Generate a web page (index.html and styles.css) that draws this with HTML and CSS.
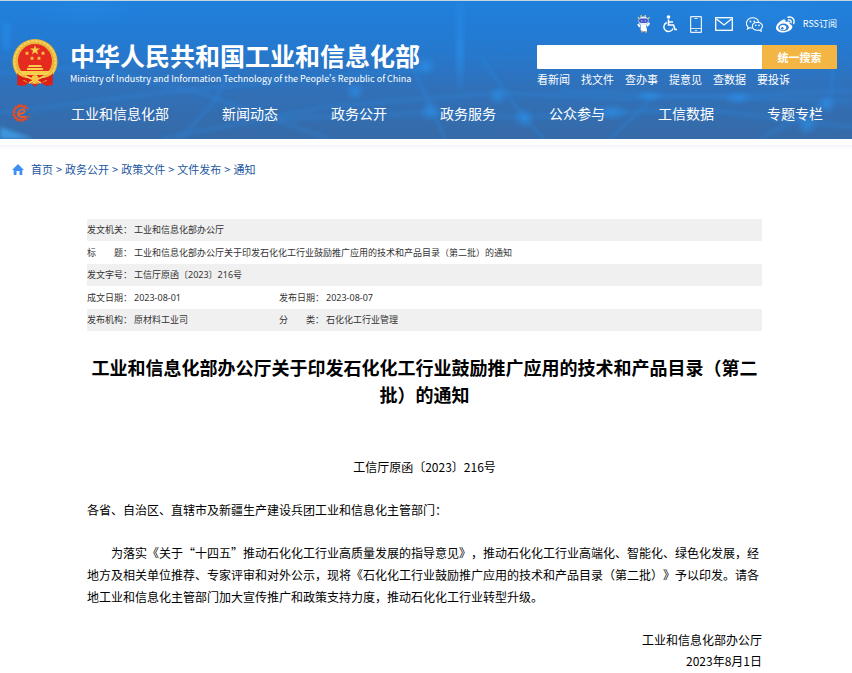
FILE: index.html
```html
<!DOCTYPE html>
<html lang="zh-CN">
<head>
  <meta charset="UTF-8">
  <meta name="viewport" content="width=device-width, initial-scale=1.0">
  <title>工业和信息化部办公厅关于印发石化化工行业鼓励推广应用的技术和产品目录（第二批）的通知</title>
  <link rel="stylesheet" href="styles.css">
</head>
<body>
  <header class="header">
    <svg class="header-bg" viewBox="0 0 852 138" preserveAspectRatio="none" aria-hidden="true">
      <defs>
        <radialGradient id="glow">
          <stop offset="0" stop-color="#2b93f0" stop-opacity="0.6"/>
          <stop offset="1" stop-color="#2b93f0" stop-opacity="0"/>
        </radialGradient>
        <linearGradient id="beam" x1="0" y1="0" x2="0" y2="1">
          <stop offset="0" stop-color="#2b93f0" stop-opacity="0.2"/>
          <stop offset="0.6" stop-color="#2b93f0" stop-opacity="0.5"/>
          <stop offset="1" stop-color="#2b93f0" stop-opacity="0"/>
        </linearGradient>
        <filter id="soft"><feGaussianBlur stdDeviation="2"/></filter>
      </defs>
      <g fill="none" stroke="#2b8ae4" stroke-opacity="0.4" stroke-width="3" filter="url(#soft)">
        <path d="M0 112 L160 92 L300 78 L430 68"/>
        <path d="M160 138 L330 105 L500 92 L620 98 L852 90"/>
        <path d="M0 72 L90 66 L200 92 L330 138"/>
        <path d="M410 60 L445 138 M480 55 L525 118 L545 138"/>
        <path d="M280 118 L420 112 L524 116 L700 108 L852 126"/>
        <path d="M560 90 L740 97 L852 100 M760 138 L830 100 L835 40"/>
        <path d="M230 70 L215 100 L180 138 M650 100 L610 138"/>
      </g>
      <rect x="456" y="0" width="8" height="92" fill="url(#beam)" filter="url(#soft)"/>
      <rect x="2" y="22" width="9" height="26" fill="#2b93f0" fill-opacity="0.4" filter="url(#soft)"/>
      <path d="M0 126 L34 138 L0 138 Z" fill="#3ea4ee" fill-opacity="0.8" filter="url(#soft)"/>
      <g fill="url(#glow)">
        <circle cx="524" cy="117" r="11"/>
        <circle cx="498" cy="95" r="10"/>
        <circle cx="430" cy="110" r="11"/>
        <circle cx="355" cy="90" r="10"/>
        <ellipse cx="612" cy="111" rx="18" ry="9"/>
        <ellipse cx="738" cy="97" rx="15" ry="7"/>
        <circle cx="827" cy="103" r="10"/>
        <circle cx="807" cy="124" r="11"/>
        <ellipse cx="650" cy="95" rx="14" ry="6"/>
        <ellipse cx="425" cy="65" rx="12" ry="10"/>
        <ellipse cx="85" cy="8" rx="60" ry="18" fill-opacity="0.4"/>
        <ellipse cx="760" cy="12" rx="90" ry="18" fill-opacity="0.4"/>
      </g>
    </svg>

    <div class="header-main">
      <a class="brand" href="#">
        <svg class="emblem" viewBox="0 0 46 48" aria-hidden="true">
          <path d="M6 36 L5 46 L12 47 L18 43 L23 48 L28 43 L34 47 L41 46 L40 36 Z" fill="#dc2219"/>
          <circle cx="23" cy="22.500" r="22.500" fill="#e9b43a"/>
          <circle cx="23" cy="22.500" r="20.500" fill="none" stroke="#f7d45c" stroke-width="2" stroke-dasharray="3 1"/>
          <circle cx="23" cy="22" r="17" fill="#e52a1f"/>
          <g fill="#f7cf4a">
            <path d="M23 6 L24.200 9.500 L28 9.500 L25 11.800 L26.100 15.500 L23 13.300 L19.900 15.500 L21 11.800 L18 9.500 L21.800 9.500 Z"/>
            <path d="M15 12 l.7 1.500 1.600 .1 -1.200 1 .4 1.600 -1.500 -.9 -1.500 .9 .4 -1.600 -1.200 -1 1.600 -.1z"/>
            <path d="M31 12 l.7 1.500 1.600 .1 -1.200 1 .4 1.600 -1.500 -.9 -1.500 .9 .4 -1.600 -1.200 -1 1.600 -.1z"/>
            <path d="M20 17 l.7 1.500 1.600 .1 -1.200 1 .4 1.600 -1.500 -.9 -1.500 .9 .4 -1.600 -1.200 -1 1.600 -.1z"/>
            <path d="M27 17 l.7 1.500 1.600 .1 -1.200 1 .4 1.600 -1.500 -.9 -1.500 .9 .4 -1.600 -1.200 -1 1.600 -.1z"/>
            <path d="M17 26 h12 l1 2 h-14 z M15 29 h16 v2 h-16 z M7 32 h32 l-3 4 h-26 z"/>
          </g>
          <path d="M5 34 Q9 39 17 39 L23 36 L29 39 Q37 39 41 34 L40 44 L34 41 L28 45 L23 42 L18 45 L12 41 L6 44 Z" fill="#d81f18"/>
          <circle cx="23" cy="39.500" r="3.500" fill="#f4c743"/>
          <path d="M13 37 L20 40 M33 37 L26 40 M17 44 L21 42 M29 44 L25 42" stroke="#f7d45c" stroke-width="1.600"/>
        </svg>
        <span class="brand-text">
          <span class="brand-cn">中华人民共和国工业和信息化部</span>
          <span class="brand-en">Ministry of Industry and Information Technology of the People's Republic of China</span>
        </span>
      </a>

      <div class="tools">
        <div class="tool-bar">
          <div class="tool-icons">
            <a href="#" aria-label="智能问答">
              <svg width="13" height="20" viewBox="0 0 13 20">
                <path d="M2 5 L1 3 M4 3 L4 1 M8 3 L8.500 1 M11 5 L12.500 3" stroke="#e4cf68" stroke-width="1.200"/>
                <path d="M3 13 L1 10 M10 12 L12.500 9 M5 16 L5.500 18 M9 16 L9 18" stroke="#fff" stroke-width="2"/>
                <ellipse cx="6.500" cy="7" rx="5" ry="4.500" fill="#e7eefb"/>
                <rect x="2" y="4.500" width="9" height="4.500" rx="2" fill="#4a55c4"/>
                <path d="M4 7 h1.500 M7.500 7 h1.500" stroke="#9ed3ff"/>
                <path d="M4 11 h5 l1 5 -3 1.500 -3.500 -1.500z" fill="#fff"/>
                <path d="M4 17.500 h2 M8 18 h2" stroke="#c99a72" stroke-width="1.500"/>
              </svg>
            </a>
            <a href="#" aria-label="无障碍">
              <svg width="14" height="18" viewBox="0 0 14 18" fill="none" stroke="#fff">
                <circle cx="5.500" cy="2" r="1.800" fill="#fff" stroke="none"/>
                <path d="M5.500 4.500 V10 H10.500 L12 14.500 H14 M5.500 7 H10" stroke-width="1.600"/>
                <path d="M3.800 7.500 A4.700 4.700 0 1 0 10 13.500" stroke-width="1.400"/>
              </svg>
            </a>
            <a href="#" aria-label="手机版">
              <svg width="12" height="17" viewBox="0 0 12 17" fill="none" stroke="#e6f0fb">
                <rect x=".6" y=".6" width="10.800" height="15.800" rx=".5" stroke-width="1.200"/>
                <path d="M4.500 2.500 H7.500 M1 12.500 H11 M5 14.500 H7" stroke-width=".9"/>
              </svg>
            </a>
            <a href="#" aria-label="邮箱">
              <svg width="18" height="14" viewBox="0 0 18 14" fill="none" stroke="#fff" stroke-width="1.300">
                <rect x=".7" y=".7" width="16.600" height="12.600"/>
                <path d="M1.500 2 L9 8 L16.500 2"/>
              </svg>
            </a>
            <a href="#" aria-label="微信">
              <svg width="17" height="15" viewBox="0 0 17 15" fill="none" stroke="#fff" stroke-width="1.100">
                <path d="M6 11 Q4.500 11 3.500 10.700 L1.500 12 L2 9.800 C-1.500 6.500 1.500 .7 6.500 .7 C9.800 .7 12.300 2.800 12.600 5.200"/>
                <path d="M11.500 5.200 C4.500 5.500 4.800 13.300 11.500 13.300 L13.200 13 L15.200 14.200 L14.900 12.200 C18 9.500 16 5.200 11.500 5.200 Z"/>
                <g fill="#fff" stroke="none"><circle cx="4.500" cy="4.500" r=".9"/><circle cx="8.300" cy="4.500" r=".9"/><circle cx="9.700" cy="8.400" r=".8"/><circle cx="13" cy="8.400" r=".8"/></g>
              </svg>
            </a>
            <a href="#" aria-label="微博">
              <svg width="19" height="17" viewBox="0 0 19 17">
                <path d="M6.500 4 C9 3 10 4 9.500 6 C12.500 4.800 14.500 5.600 13.500 8 C20 10 14.500 16.500 7.500 16.500 C3 16.500 0 14.500 0 11.700 C0 9 3.500 5 6.500 4 Z" fill="#fff"/>
                <ellipse cx="7.500" cy="11.300" rx="5.300" ry="3.700" fill="#2a7fd6"/>
                <ellipse cx="7" cy="11.600" rx="3.300" ry="2.700" fill="#fff"/>
                <circle cx="6.300" cy="12.200" r="1.200" fill="#2a7fd6"/>
                <path d="M12 1.300 C16.500 .2 19 3.500 17.700 7.500 M12.500 4 C14.500 3.500 15.500 5 15 6.700" fill="none" stroke="#fff" stroke-width="1.400" stroke-linecap="round"/>
              </svg>
            </a>
          </div>
          <a class="rss" href="#">RSS订阅</a>
        </div>
        <form class="search">
          <input type="text" aria-label="搜索">
          <button type="button">统一搜索</button>
        </form>
        <div class="quick-links">
          <a href="#">看新闻</a>
          <a href="#">找文件</a>
          <a href="#">查办事</a>
          <a href="#">提意见</a>
          <a href="#">查数据</a>
          <a href="#">要投诉</a>
        </div>
      </div>
    </div>

    <nav class="nav">
      <a class="nav-logo" href="#" aria-label="首页">
        <svg width="20" height="20" viewBox="0 0 20 20" fill="none">
          <circle cx="9" cy="10" r="8.300" stroke="#dd4928" stroke-width="1.800" stroke-dasharray="1.700 1.560"/>
          <path d="M14.500 5.800 A7 7 0 1 0 14.500 14.200" stroke="#ea4a1e" stroke-width="1.800"/>
          <path d="M5.500 11 C10 11 13 10 12.500 7.500 C12 5.500 7.500 6 6 10 C5.500 14 11 15.500 14 12.500" stroke="#f05a23" stroke-width="1.800"/>
          <path d="M8 12.500 C13 12 17 9.500 19 4.500 C20 9 17 12.500 12 13" fill="#1d72bb"/>
        </svg>
      </a>
      <ul class="nav-list">
        <li><a href="#">工业和信息化部</a></li>
        <li><a href="#">新闻动态</a></li>
        <li><a href="#">政务公开</a></li>
        <li><a href="#">政务服务</a></li>
        <li><a href="#">公众参与</a></li>
        <li><a href="#">工信数据</a></li>
        <li><a href="#">专题专栏</a></li>
      </ul>
    </nav>
  </header>

  <div class="crumbs">
    <svg width="12" height="11" viewBox="0 0 12 11" aria-hidden="true">
      <path d="M6 0 L12 6 H10.300 V11 H7.500 V7 H4.500 V11 H1.700 V6 H0 Z" fill="#3f8ff5"/>
    </svg>
    <a href="#">首页</a><span>&gt;</span><a href="#">政务公开</a><span>&gt;</span><a href="#">政策文件</a><span>&gt;</span><a href="#">文件发布</a><span>&gt;</span><a href="#">通知</a>
  </div>

  <main class="article">
    <table class="meta">
      <tr>
        <th scope="row">发文机关：</th>
        <td colspan="3">工业和信息化部办公厅</td>
      </tr>
      <tr>
        <th scope="row">标　　题：</th>
        <td colspan="3">工业和信息化部办公厅关于印发石化化工行业鼓励推广应用的技术和产品目录（第二批）的通知</td>
      </tr>
      <tr>
        <th scope="row">发文字号：</th>
        <td colspan="3">工信厅原函〔2023〕216号</td>
      </tr>
      <tr>
        <th scope="row">成文日期：</th>
        <td class="first">2023-08-01</td>
        <th scope="row">发布日期：</th>
        <td>2023-08-07</td>
      </tr>
      <tr>
        <th scope="row">发布机构：</th>
        <td class="first">原材料工业司</td>
        <th scope="row">分　　类：</th>
        <td>石化化工行业管理</td>
      </tr>
    </table>

    <h1>工业和信息化部办公厅关于印发石化化工行业鼓励推广应用的技术和产品目录（第二批）的通知</h1>

    <div class="content">
      <p class="doc-no">工信厅原函〔2023〕216号</p>
      <p>各省、自治区、直辖市及新疆生产建设兵团工业和信息化主管部门：</p>
      <p class="indent">为落实《关于“十四五”推动石化化工行业高质量发展的指导意见》，推动石化化工行业高端化、智能化、绿色化发展，经地方及相关单位推荐、专家评审和对外公示，现将《石化化工行业鼓励推广应用的技术和产品目录（第二批）》予以印发。请各地工业和信息化主管部门加大宣传推广和政策支持力度，推动石化化工行业转型升级。</p>
      <p class="sign">工业和信息化部办公厅<br>2023年8月1日</p>
    </div>
  </main>
</body>
</html>
```
FILE: styles.css
```css
* {
  box-sizing: border-box;
}
body {
  margin: 0;
  background: #fff;
  color: #333;
  font-family: "Noto Sans CJK SC", sans-serif;
  font-size: 12px;
  text-spacing-trim: space-all;
}
a {
  color: inherit;
  text-decoration: none;
}

/* header */
.header {
  position: relative;
  border-top: 1px solid #c5d6e2;
  background: linear-gradient(to bottom, #1f80dc 0%, #2579cf 35%, #3170b8 65%, #366aa7 100%);
  color: #fff;
}
.header-bg {
  position: absolute;
  top: 0;
  left: 0;
  width: 100%;
  height: 100%;
}
.header-main {
  position: relative;
  display: flex;
  justify-content: space-between;
  padding: 12px 15px 0 12px;
}
.brand {
  display: flex;
  gap: 12px;
  padding-top: 26px;
}
.emblem {
  width: 46px;
  height: 48px;
}
.brand-text {
  display: flex;
  flex-direction: column;
  gap: 2px;
  padding-top: 2px;
  white-space: nowrap;
}
.brand-cn {
  font-size: 25px;
  font-weight: bold;
  line-height: 29px;
}
.brand-en {
  font-size: 9px;
  line-height: 13px;
}
.tools {
  width: 300px;
}
.tool-bar {
  display: flex;
  justify-content: flex-end;
  align-items: center;
  gap: 8px;
  height: 22px;
}
.tool-icons {
  display: flex;
  align-items: center;
  gap: 13px;
}
.tool-icons a,
.tool-icons svg {
  display: block;
}
.rss {
  font-size: 9px;
  line-height: 20px;
}
.search {
  display: flex;
  height: 24px;
  margin: 10px 0 0;
}
.search input {
  flex: 1;
  min-width: 0;
  padding: 0 6px;
  border: none;
  border-radius: 1px 0 0 1px;
  background: #fff;
}
.search button {
  width: 75px;
  padding: 0;
  border: none;
  border-radius: 0 1px 1px 0;
  background: #f3b544;
  color: #fff;
  font-family: inherit;
  font-size: 11px;
  font-weight: bold;
  cursor: pointer;
}
.quick-links {
  display: flex;
  gap: 11px;
  font-size: 11px;
  line-height: 20px;
}

/* main navigation */
.nav {
  position: relative;
  display: flex;
  align-items: center;
  gap: 39px;
  height: 50px;
  padding: 0 29px 2px 12px;
}
.nav-logo,
.nav-logo svg {
  display: block;
}
.nav-list {
  flex: 1;
  display: flex;
  justify-content: space-between;
  margin: 0;
  padding: 0;
  list-style: none;
  font-size: 14px;
  line-height: 20px;
}

/* breadcrumb */
.crumbs {
  display: flex;
  align-items: center;
  gap: 3px;
  margin-top: 6px;
  padding: 14px 12px 0;
  background: linear-gradient(to bottom, #f3f5fa, #fff 5px);
  color: #1a569f;
  font-size: 11px;
  line-height: 20px;
}
.crumbs svg {
  margin-right: 4px;
}

/* article */
.article {
  margin: 0 90px 0 87px;
  padding-top: 40px;
}
.meta {
  width: 100%;
  border-collapse: collapse;
  font-family: "Noto Sans", "Noto Sans CJK SC", sans-serif;
  font-size: 9px;
  line-height: 14px;
}
.meta tr {
  height: 23px;
}
.meta tr:nth-child(odd) {
  height: 22px;
  background: #f0f0f0;
}
.meta th {
  width: 47px;
  padding: 0;
  font-weight: normal;
  text-align: left;
  white-space: nowrap;
}
.meta td {
  padding: 0;
}
.meta .first {
  width: 145px;
}
h1 {
  margin: 23px 0 48px;
  color: #000;
  font-size: 18px;
  font-weight: bold;
  line-height: 27px;
  text-align: center;
}
.content {
  color: #000;
  font-size: 12px;
  line-height: 22px;
}
.content p {
  margin: 0 0 21px;
}
.content .doc-no {
  text-align: center;
}
.content .indent {
  text-indent: 2em;
}
.content .sign {
  margin: 0;
  line-height: 21px;
  text-align: right;
}
```
